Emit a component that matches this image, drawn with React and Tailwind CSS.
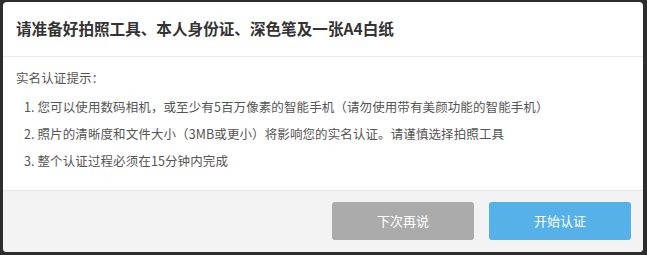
import React from "react";

export default function App() {
  return (
    <div className="w-[647px] h-[255px] bg-[#2d2d2d] pl-[3px] pt-[2px] pr-[4px] pb-[3px] font-['Noto_Sans_CJK_SC',sans-serif]">
      <div className="w-full h-full bg-white rounded-[4px] flex flex-col overflow-hidden">
        <div className="h-[55px] shrink-0 border-b border-[#ebebeb] px-[13px] flex items-center">
          <h1 className="text-[15.6px] font-bold text-[#333] leading-none">请准备好拍照工具、本人身份证、深色笔及一张A4白纸</h1>
        </div>
        <div className="flex-1 px-[13px] pt-[12px] text-[12.5px] text-[#555] leading-[27px] tracking-[0.1px]">
          <p className="leading-[18px] mb-[6px]">实名认证提示：</p>
          <ol className="pl-[8px]">
            <li>1. 您可以使用数码相机，或至少有5百万像素的智能手机（请勿使用带有美颜功能的智能手机）</li>
            <li>2. 照片的清晰度和文件大小（3MB或更小）将影响您的实名认证。请谨慎选择拍照工具</li>
            <li>3. 整个认证过程必须在15分钟内完成</li>
          </ol>
        </div>
        <div className="h-[62px] shrink-0 bg-[#f3f3f3] border-t border-[#e6e6e6] flex items-center justify-end gap-[15px] pr-[12px] pb-[1px]">
          <button className="w-[142px] h-[38px] rounded-[3px] bg-[#ababab] text-white text-[13px]">下次再说</button>
          <button className="w-[142px] h-[38px] rounded-[3px] bg-[#55b1e7] text-white text-[13px]">开始认证</button>
        </div>
      </div>
    </div>
  );
}
